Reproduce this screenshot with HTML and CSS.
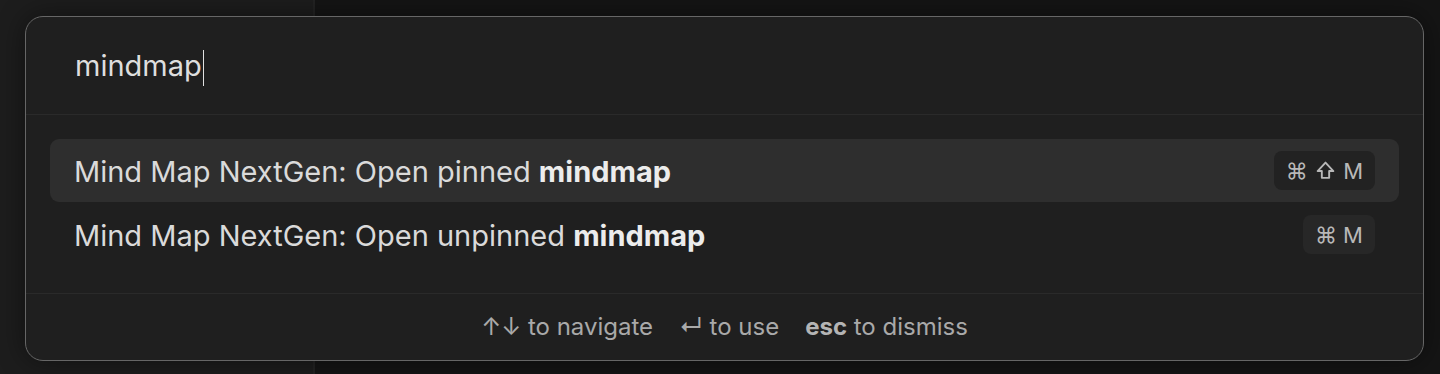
FILE: index.html
```html
<!DOCTYPE html>
<html>
<head>
<meta charset="utf-8"/>
<title>Command palette</title>
<link rel="stylesheet" href="styles.css">
</head>
<body>
<div class="g-app">
    <div class="g-side"></div>
    <div class="g-main"></div>
</div>
<!-- prompt -->
<div class="m-prompt">
    <div class="m-input"><span class="u-query">mindmap</span><span class="u-caret"></span></div>
    <ul class="m-list">
        <li class="z-sel">
            <span class="u-title">Mind Map NextGen: Open pinned <b>mindmap</b></span>
            <kbd class="u-keys">⌘ <svg class="u-shift" viewBox="0 0 20 20" width="21" height="21"><path d="M10 2.5 L17.5 10.5 H13.5 V17 H6.5 V10.5 H2.5 Z" fill="none" stroke="currentColor" stroke-width="1.8" stroke-linejoin="round"/></svg> M</kbd>
        </li>
        <li>
            <span class="u-title">Mind Map NextGen: Open unpinned <b>mindmap</b></span>
            <kbd class="u-keys">⌘ M</kbd>
        </li>
    </ul>
    <div class="m-foot">
        <span><i>↑↓</i> to navigate</span>
        <span><i>↵</i> to use</span>
        <span><b>esc</b> to dismiss</span>
    </div>
</div>
</body>
</html>
```
FILE: styles.css
```css
/* reset */
html,body,ul,li,div{margin:0;padding:0;}
li{list-style:none;}
body{background-color:#141414;font-family:Inter,"Noto Sans",sans-serif;color:#dcdcdc;height:374px;overflow:hidden;}

/* workspace behind */
.g-app{display:flex;height:374px;}
.g-side{width:313px;background-color:#1d1d1d;border-right:2px solid #232323;}
.g-main{flex:1;background-color:#151515;}

/* prompt */
.m-prompt{position:absolute;left:25px;top:16px;width:1397px;height:343px;background-color:#1f1f1f;border:1px solid #666;border-radius:18px;box-shadow:0 0 28px rgba(0,0,0,.45);display:flex;flex-direction:column;}
.m-input{height:98px;border-bottom:1px solid #2a2a2a;display:flex;align-items:center;padding:0 0 0 49px;box-sizing:border-box;}
.u-query{font-size:29px;color:#dedede;}
.u-caret{display:inline-block;width:1.5px;height:36px;background-color:#e0e0e0;margin-left:1px;margin-top:4px;}

.m-list{padding:24px 24px 26px;}
.m-list li{height:63px;display:flex;align-items:center;justify-content:space-between;padding:0 24px;border-radius:9px;margin-bottom:1px;}
.m-list li.z-sel{background-color:#2e2e2e;}
.u-title{font-size:29px;color:#dadada;padding-top:2px;}
.u-title b{font-weight:700;color:#ececec;}
.u-keys{font-family:Inter,"DejaVu Sans",sans-serif;font-size:22px;color:#b8b8b8;background-color:#272727;border-radius:8px;height:39px;padding:0 12px;display:flex;align-items:center;white-space:pre;}
.z-sel .u-keys{background-color:#222;}
.u-shift{margin:0 1px;}

.m-foot{flex:1;border-top:1px solid #2a2a2a;display:flex;justify-content:center;align-items:center;gap:26px;font-size:24px;color:#a9a9a9;padding-bottom:2px;}
.m-foot i{font-style:normal;}
.m-foot b{font-weight:700;color:#b4b4b4;}
```
